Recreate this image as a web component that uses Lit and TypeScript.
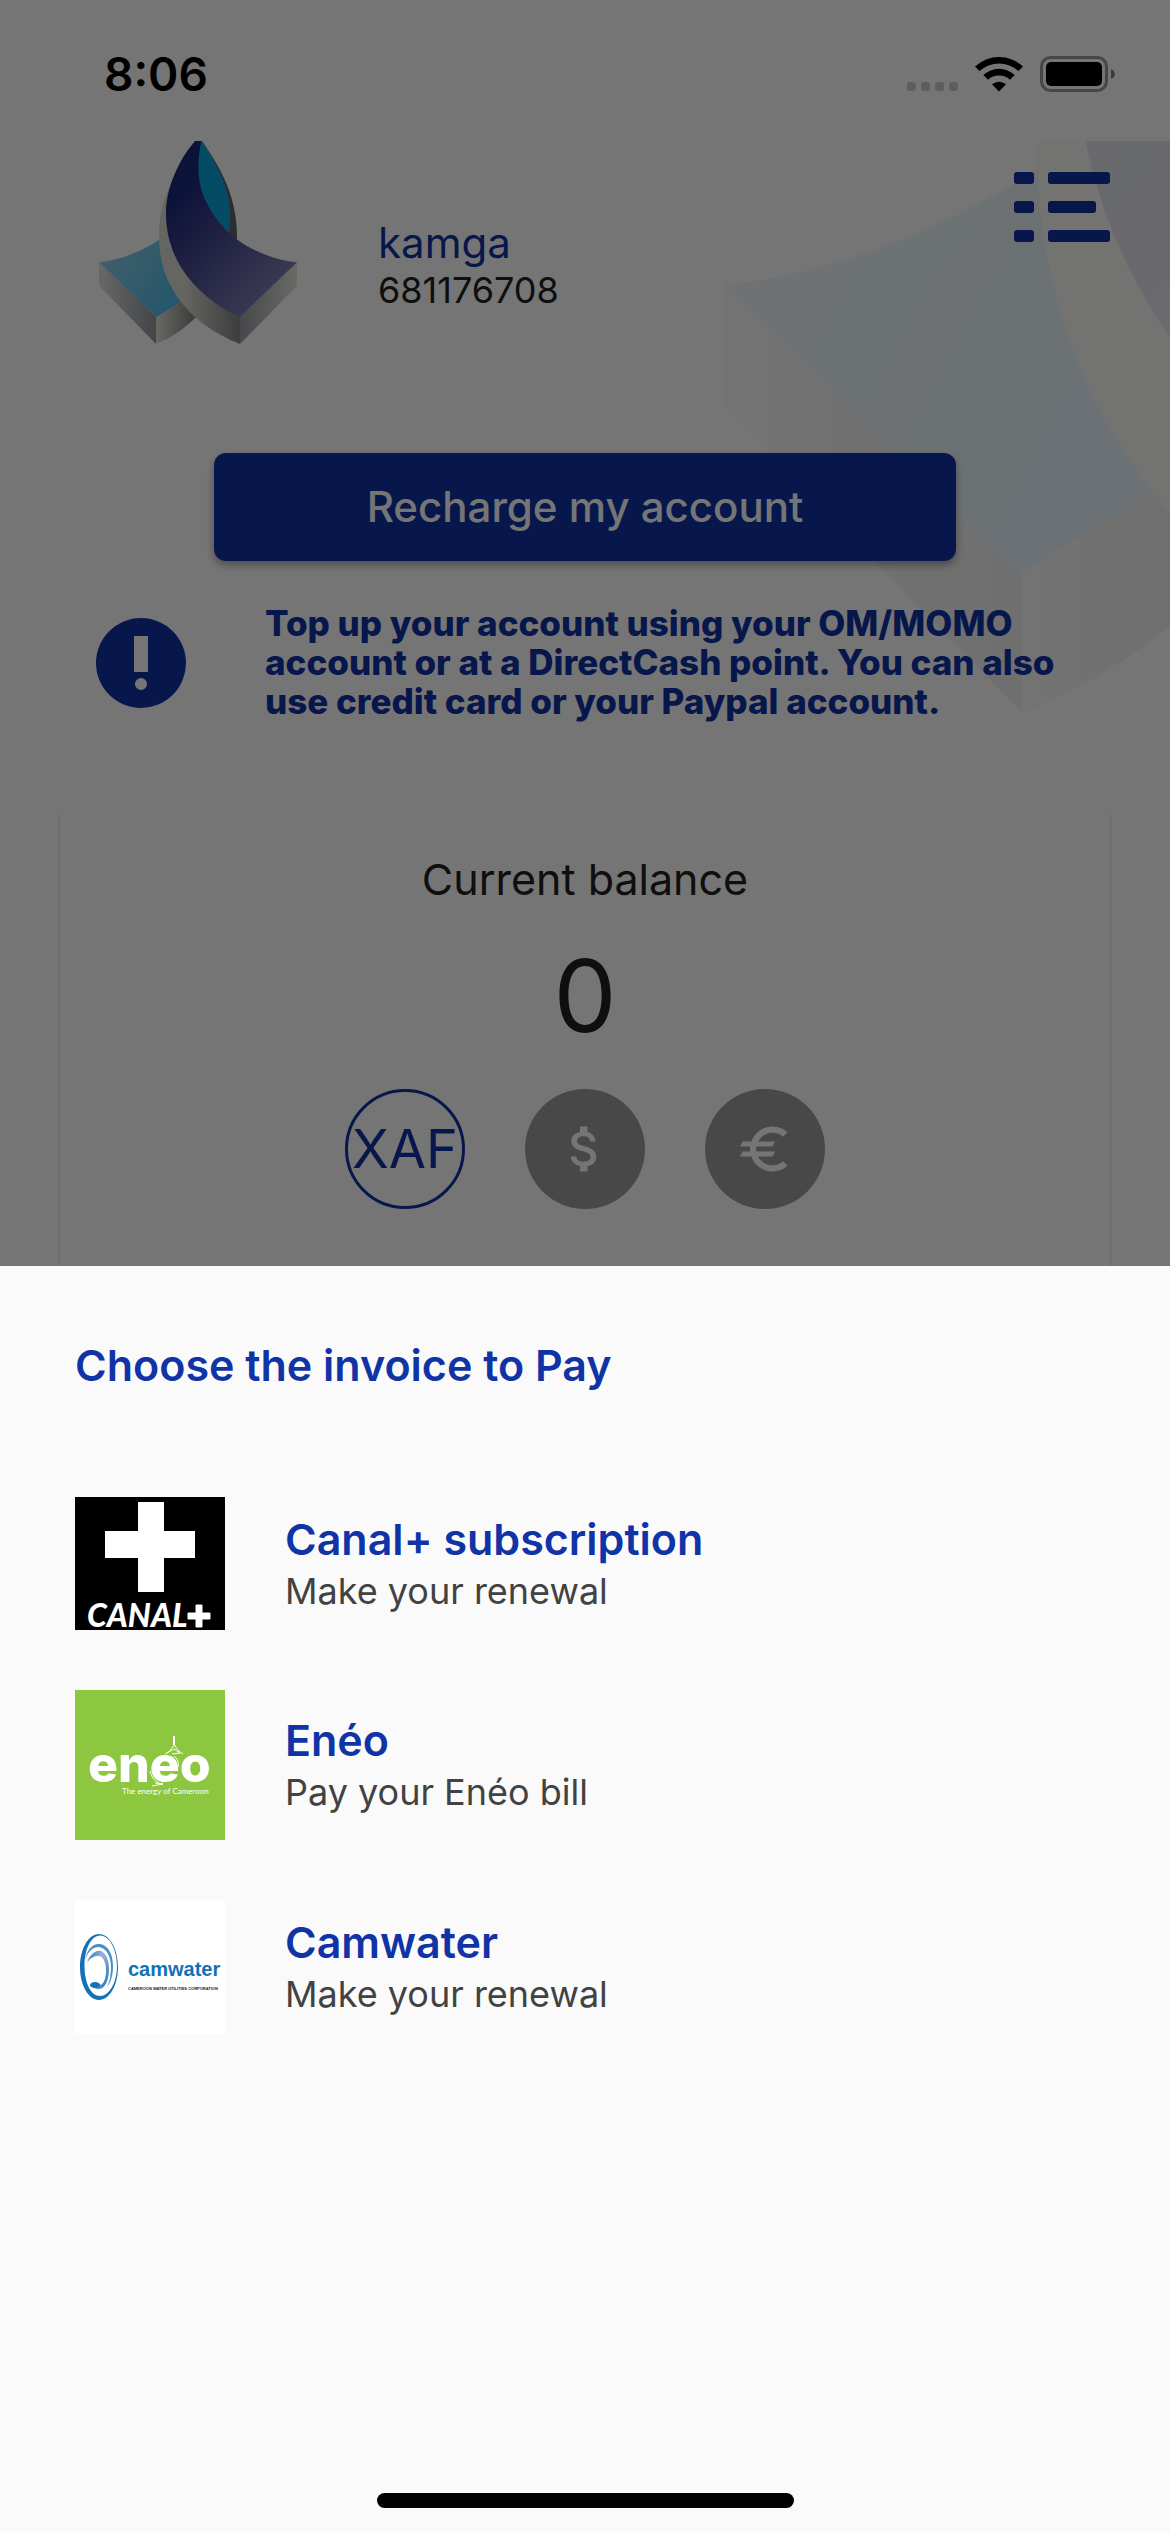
import { LitElement, html, svg, css, type TemplateResult } from "lit";
import { customElement, property, state } from "lit/decorators.js";
import { classMap } from "lit/directives/class-map.js";

interface Biller {
  name: string;
  note: string;
  logo: TemplateResult;
}

const canalLogo = html`
  <svg class="logo" viewBox="0 0 150 133" width="150" height="133" role="img" aria-label="Canal+">
    <rect width="150" height="133" fill="#000" />
    <path d="M63 5h26v29h31v27H89v34H63V61H30V34h33z" fill="#fff" />
    <text x="12" y="130" class="canal-word">CANAL</text>
    <path d="M121 108h6v8h8v6h-8v8h-6v-8h-8v-6h8z" fill="#fff" stroke="#fff" stroke-width="1" />
  </svg>
`;

const eneoLogo = html`
  <svg class="logo" viewBox="0 0 150 150" width="150" height="150" role="img" aria-label="Enéo">
    <rect width="150" height="150" fill="#8dc63f" />
    <text x="13" y="92" class="eneo-word">eneo</text>
    <g fill="none" stroke="#fff" stroke-width="1">
      <path d="M99 46v9" stroke-width="2" />
      <path d="M99 54c-1 4-5 8-9 10M99 54c2 4 5 8 9 10M97 64l8-1M92 63l7-4 6 4" />
      <path d="M75 81c2 8 6 12 13 13M77 80c3 7 6 10 12 12M99 66c4 3 5 7 4 11" />
      <path d="M77 96l11-2-8-1" />
    </g>
    <text x="47" y="104" class="eneo-tag">The energy of Cameroon</text>
  </svg>
`;

const camwaterLogo = html`
  <svg class="logo" viewBox="0 0 150 134" width="150" height="134" role="img" aria-label="Camwater">
    <defs>
      <linearGradient id="drop" x1="0" y1="0" x2="1" y2="1">
        <stop offset="0" stop-color="#1272b5" />
        <stop offset="0.4" stop-color="#9fb4dc" />
        <stop offset="1" stop-color="#1272b5" />
      </linearGradient>
    </defs>
    <rect width="150" height="134" fill="#fff" />
    <path
      fill="#1272b5"
      fill-rule="evenodd"
      d="M24 34c10.500 0 19 14.800 19 33s-8.500 33-19 33S5 85.200 5 67s8.500-33 19-33zM25 35.500C16 36 9.500 49 9.500 66S16 96 25 96s17-13 17-30S34 35 25 35.500z"
    />
    <path d="M10 60c2-11 8-17 15-16 8 1 13 10 13 22 0 9-2 16-6 21 3-6 4-13 4-20 0-11-5-19-12-20-6 0-11 4-14 13z" fill="#4a8fc6" />
    <path
      fill="url(#drop)"
      d="M12 63c3-9 9-13 14-12 5 2 8 9 8 18 0 11-4 20-10 20-4 0-7-2-8-5 4-3 8-1 10 1 3-2 5-7 5-14 0-9-3-15-8-15-4 0-8 2-11 7z"
    />
    <ellipse cx="20" cy="85" rx="5" ry="3" fill="#1272b5" />
    <text x="53" y="76" class="cam-word">camwater</text>
    <text x="53" y="90" class="cam-tag">CAMEROON WATER UTILITIES CORPORATION</text>
  </svg>
`;

/** The folded-ribbon brand mark; it scales to whatever box holds it. */
@customElement("brand-mark")
export class BrandMark extends LitElement {
  static styles = css`
    :host {
      display: block;
    }
    .mark {
      display: block;
      width: 100%;
      height: auto;
    }
  `;

  render() {
    return html`
      <svg class="mark" viewBox="57 63 594 609" aria-hidden="true">
        <defs>
          <linearGradient id="front" gradientUnits="userSpaceOnUse" x1="270" y1="250" x2="560" y2="520">
            <stop offset="0" stop-color="#1a2a7c" />
            <stop offset="0.300" stop-color="#3c3e8a" />
            <stop offset="1" stop-color="#7c7cb4" />
          </linearGradient>
          <linearGradient id="arm" gradientUnits="userSpaceOnUse" x1="90" y1="430" x2="300" y2="540">
            <stop offset="0" stop-color="#86cce8" />
            <stop offset="1" stop-color="#50bcea" />
          </linearGradient>
          <linearGradient id="side-a"><stop offset="0" stop-color="#e2e2dc" /><stop offset="1" stop-color="#92969e" /></linearGradient>
          <linearGradient id="side-b"><stop offset="0" stop-color="#e2e2dc" /><stop offset="1" stop-color="#7c7c7c" /></linearGradient>
          <linearGradient id="side-c"><stop offset="0" stop-color="#9a9ea4" /><stop offset="1" stop-color="#e6e6de" /></linearGradient>
          <linearGradient id="side-d" x1="0.300" x2="1"><stop offset="0" stop-color="#dcdcd4" /><stop offset="1" stop-color="#868686" /></linearGradient>
        </defs>
        <path d="M57 427L228 592V672L57 497Z" fill="url(#side-a)" />
        <path d="M228 592L310 541L354 586C320 620 275 655 228 672Z" fill="url(#side-b)" />
        <path d="M57 427C120 420 185 395 240 358C238 430 265 500 310 541L228 592Z" fill="url(#arm)" />
        <path d="M366 63C425 150 472 230 471 360L440 340Z" fill="#626262" />
        <path d="M366 63C405 125 450 200 450 280Q451 315 447 342L340 240L345 63Z" fill="#0aa4dc" />
        <path d="M283 170C250 230 237 285 237 350C237 480 310 605 480 672V592L270 380Z" fill="url(#side-d)" />
        <path d="M480 592L651 427V497L480 672Z" fill="url(#side-c)" />
        <path
          d="M345 63H364C350 130 352 190 376 240C400 292 430 325 468 356C520 395 590 422 651 427L480 592C370 540 258 440 258 280C258 200 300 115 345 63Z"
          fill="url(#front)"
        />
      </svg>
    `;
  }
}

@customElement("status-bar")
export class StatusBar extends LitElement {
  static styles = css`
    :host {
      display: flex;
      align-items: center;
      justify-content: space-between;
      height: 141px;
      padding: 6px 54px 0 104px;
      box-sizing: border-box;
      color: #000;
    }
    .time {
      font-size: 46px;
      line-height: 56px;
      font-weight: 600;
    }
    .icons {
      display: block;
    }
  `;

  render() {
    return html`
      <span class="time">8:06</span>
      <svg class="icons" width="209" height="38" viewBox="0 0 209 38" aria-hidden="true">
        <g fill="#000" fill-opacity="0.200">
          <rect x="0" y="27" width="9" height="9" rx="3" />
          <rect x="14" y="27" width="9" height="9" rx="3" />
          <rect x="28" y="27" width="9" height="9" rx="3" />
          <rect x="42" y="27" width="9" height="9" rx="3" />
        </g>
        <path
          d="M68 11.500a35 35 0 0 1 48 0l-4.500 4.600a28.500 28.500 0 0 0-39 0zM76.300 20a23 23 0 0 1 31.400 0l-4.700 4.700a16.500 16.500 0 0 0-22 0zM85 29.200a11 11 0 0 1 14 0l-7 7.300z"
        />
        <rect x="134.500" y="2.500" width="65" height="33" rx="9" fill="none" stroke="#000" stroke-opacity="0.400" stroke-width="3" />
        <rect x="139" y="7" width="56" height="24" rx="5" />
        <path d="M204 14c5 2 5 8 0 10z" fill-opacity="0.500" />
      </svg>
    `;
  }
}

@customElement("currency-option")
export class CurrencyOption extends LitElement {
  @property() code = "";
  @property({ type: Boolean }) selected = false;

  static styles = css`
    .option {
      display: grid;
      place-items: center;
      width: 120px;
      height: 120px;
      padding: 0;
      border: 0;
      border-radius: 50%;
      background: #9e9e9e;
      color: #fff;
      font: 400 54px/60px Inter, "Liberation Sans", sans-serif;
    }
    .selected {
      border: 3px solid #1034a6;
      background: transparent;
      color: #1034a6;
    }
    .glyph {
      display: block;
      width: 60px;
      height: 60px;
      fill: currentColor;
    }
  `;

  private glyph() {
    const paths: Record<string, string> = {
      USD: "M11.800 10.900c-2.270-.590-3-1.200-3-2.150 0-1.090 1.010-1.850 2.700-1.850 1.780 0 2.440.850 2.500 2.100h2.210c-.070-1.720-1.120-3.300-3.210-3.810V3h-3v2.160c-1.940.420-3.500 1.680-3.500 3.610 0 2.310 1.910 3.460 4.700 4.130 2.500.600 3 1.480 3 2.410 0 .690-.490 1.790-2.700 1.790-2.060 0-2.870-.920-2.980-2.100h-2.200c.120 2.190 1.760 3.420 3.680 3.830V21h3v-2.150c1.950-.370 3.500-1.500 3.500-3.550 0-2.840-2.430-3.810-4.700-4.400z",
      EUR: "M15 18.500c-2.510 0-4.680-1.420-5.760-3.500H15l1-2H8.580c-.050-.330-.080-.660-.080-1s.030-.670.080-1H15l1-2H9.240C10.320 6.920 12.500 5.500 15 5.500c1.610 0 3.090.590 4.230 1.570L21 5.300C19.410 3.870 17.300 3 15 3c-3.920 0-7.240 2.510-8.480 6H3l-1 2h4.060c-.040.330-.060.660-.060 1s.020.670.060 1H3l-1 2h4.520c1.240 3.490 4.560 6 8.480 6 2.310 0 4.410-.870 6-2.300l-1.780-1.770c-1.130.980-2.600 1.570-4.220 1.570z",
    };
    return svg`<path d=${paths[this.code]} />`;
  }

  render() {
    return html`
      <button
        class=${classMap({ option: true, selected: this.selected })}
        aria-label=${this.code}
        aria-pressed=${this.selected ? "true" : "false"}
      >
        ${this.code === "XAF" ? this.code : html`<svg class="glyph" viewBox="0 0 24 24" aria-hidden="true">${this.glyph()}</svg>`}
      </button>
    `;
  }
}

@customElement("invoice-sheet")
export class InvoiceSheet extends LitElement {
  @property({ attribute: false }) billers: Biller[] = [];

  static styles = css`
    :host {
      display: flex;
      flex-direction: column;
      box-sizing: border-box;
      padding: 75px 75px 24px;
      background: #fafafa;
    }
    .title {
      margin: 0 0 108px;
      font-size: 43px;
      line-height: 48px;
      font-weight: 600;
      color: #1034a6;
    }
    .list {
      display: flex;
      flex-direction: column;
      gap: 60px;
      margin: 0;
      padding: 0;
      list-style: none;
    }
    .row {
      display: flex;
      align-items: center;
      gap: 60px;
      width: 100%;
      padding: 0;
      border: 0;
      background: none;
      font-family: inherit;
      text-align: left;
    }
    .text {
      display: flex;
      flex-direction: column;
    }
    .name {
      font-size: 43px;
      line-height: 54px;
      font-weight: 600;
      color: #1034a6;
    }
    .note {
      font-size: 36px;
      line-height: 50px;
      color: #424242;
    }
    .logo {
      display: block;
      flex: none;
      overflow: visible;
    }
    .canal-word {
      font: italic 900 32px Lato, sans-serif;
      fill: #fff;
    }
    .eneo-word {
      font: 800 50px Inter, sans-serif;
      fill: #fff;
    }
    .eneo-tag {
      font: 400 8px Lato, sans-serif;
      fill: #fff;
    }
    .cam-word {
      font: 700 20px "Liberation Sans", sans-serif;
      fill: #1272b5;
    }
    .cam-tag {
      font: 700 4px "Liberation Sans", sans-serif;
      fill: #222;
    }
    .handle {
      align-self: center;
      width: 417px;
      height: 15px;
      margin-top: auto;
      border-radius: 8px;
      background: #000;
    }
  `;

  render() {
    return html`
      <h2 class="title">Choose the invoice to Pay</h2>
      <ul class="list">
        ${this.billers.map(
          (b) => html`
            <li>
              <button class="row">
                ${b.logo}
                <span class="text">
                  <span class="name">${b.name}</span>
                  <span class="note">${b.note}</span>
                </span>
              </button>
            </li>
          `,
        )}
      </ul>
      <div class="handle"></div>
    `;
  }
}

@customElement("app-root")
export class AppRoot extends LitElement {
  @state() private currency = "XAF";

  private billers: Biller[] = [
    { name: "Canal+ subscription", note: "Make your renewal", logo: canalLogo },
    { name: "Enéo", note: "Pay your Enéo bill", logo: eneoLogo },
    { name: "Camwater", note: "Make your renewal", logo: camwaterLogo },
  ];

  static styles = css`
    :host {
      display: flex;
      flex-direction: column;
      position: relative;
      min-height: 100vh;
      overflow: hidden;
      background: #fff;
      font-family: Inter, "Liberation Sans", sans-serif;
    }
    .home {
      display: flex;
      flex: 1;
      flex-direction: column;
      position: relative;
      overflow: hidden;
    }
    .watermark {
      position: absolute;
      top: -490px;
      right: -589px;
      width: 1035px;
      opacity: 0.12;
    }
    .header,
    .recharge,
    .info,
    .card {
      position: relative;
    }
    .header {
      display: flex;
      align-items: flex-start;
      height: 312px;
      padding: 0 60px 0 99px;
      box-sizing: border-box;
    }
    .brand {
      width: 198px;
      margin-right: 81px;
    }
    .user {
      flex: 1;
      padding-top: 78px;
    }
    .user-name {
      font-size: 42px;
      line-height: 48px;
      color: #1034a6;
    }
    .user-phone {
      font-size: 36px;
      line-height: 46px;
      color: #212121;
    }
    .menu {
      padding: 0;
      border: 0;
      margin-top: 31px;
      background: none;
    }
    .menu-icon {
      display: block;
      fill: #1034a6;
    }
    .recharge {
      height: 108px;
      margin: 0 214px;
      border: 0;
      border-radius: 12px;
      background: #1034a6;
      box-shadow: 0 4px 8px rgba(0, 0, 0, 0.35);
      color: #fff;
      font: 500 42px/48px Inter, "Liberation Sans", sans-serif;
    }
    .info {
      display: flex;
      align-items: center;
      gap: 79px;
      margin: 43px 60px 84px 96px;
    }
    .info-icon {
      flex: none;
      display: block;
    }
    .info-text {
      margin: 0;
      font-size: 35px;
      line-height: 39px;
      font-weight: 800;
      color: #1034a6;
    }
    .card {
      display: flex;
      flex: 1;
      flex-direction: column;
      align-items: center;
      margin: 0 60px;
      padding-top: 50px;
      border-radius: 12px 12px 0 0;
      background: #fff;
      box-shadow: 0 3px 3px rgba(0, 0, 0, 0.25);
    }
    .card-title {
      margin: 0;
      font-size: 43px;
      line-height: 48px;
      font-weight: 400;
      color: #212121;
    }
    .amount {
      margin: 42px 0;
      font-size: 100px;
      line-height: 102px;
      color: #212121;
    }
    .currencies {
      display: flex;
      gap: 60px;
    }
    .scrim {
      position: absolute;
      inset: 0;
      background: rgba(0, 0, 0, 0.54);
    }
    .sheet {
      position: absolute;
      inset: 50% 0 0;
    }
  `;

  render() {
    return html`
      <status-bar></status-bar>
      <main class="home">
        <brand-mark class="watermark"></brand-mark>
        <header class="header">
          <brand-mark class="brand"></brand-mark>
          <div class="user">
            <div class="user-name">kamga</div>
            <div class="user-phone">681176708</div>
          </div>
          <button class="menu" aria-label="Menu">
            <svg class="menu-icon" width="96" height="70" viewBox="0 0 96 70" aria-hidden="true">
              <rect width="20" height="12" rx="3" />
              <rect x="34" width="62" height="12" rx="3" />
              <rect y="29" width="20" height="12" rx="3" />
              <rect x="34" y="29" width="48" height="12" rx="3" />
              <rect y="58" width="20" height="12" rx="3" />
              <rect x="34" y="58" width="62" height="12" rx="3" />
            </svg>
          </button>
        </header>
        <button class="recharge">Recharge my account</button>
        <section class="info">
          <svg class="info-icon" width="90" height="90" viewBox="0 0 90 90" aria-hidden="true">
            <path
              fill="#1034a6"
              fill-rule="evenodd"
              d="M45 0a45 45 0 1 1 0 90a45 45 0 0 1 0-90zM38 18v36h14V18zM45 60a6 6 0 1 0 0 12a6 6 0 0 0 0-12z"
            />
          </svg>
          <p class="info-text">
            Top up your account using your OM/MOMO<br />account or at a DirectCash point. You can also<br />use credit card or your
            Paypal account.
          </p>
        </section>
        <section class="card">
          <h1 class="card-title">Current balance</h1>
          <div class="amount">0</div>
          <div class="currencies">
            ${["XAF", "USD", "EUR"].map(
              (c) => html`
                <currency-option
                  .code=${c}
                  .selected=${this.currency === c}
                  @click=${() => (this.currency = c)}
                ></currency-option>
              `,
            )}
          </div>
        </section>
      </main>
      <div class="scrim"></div>
      <invoice-sheet class="sheet" .billers=${this.billers}></invoice-sheet>
    `;
  }
}
